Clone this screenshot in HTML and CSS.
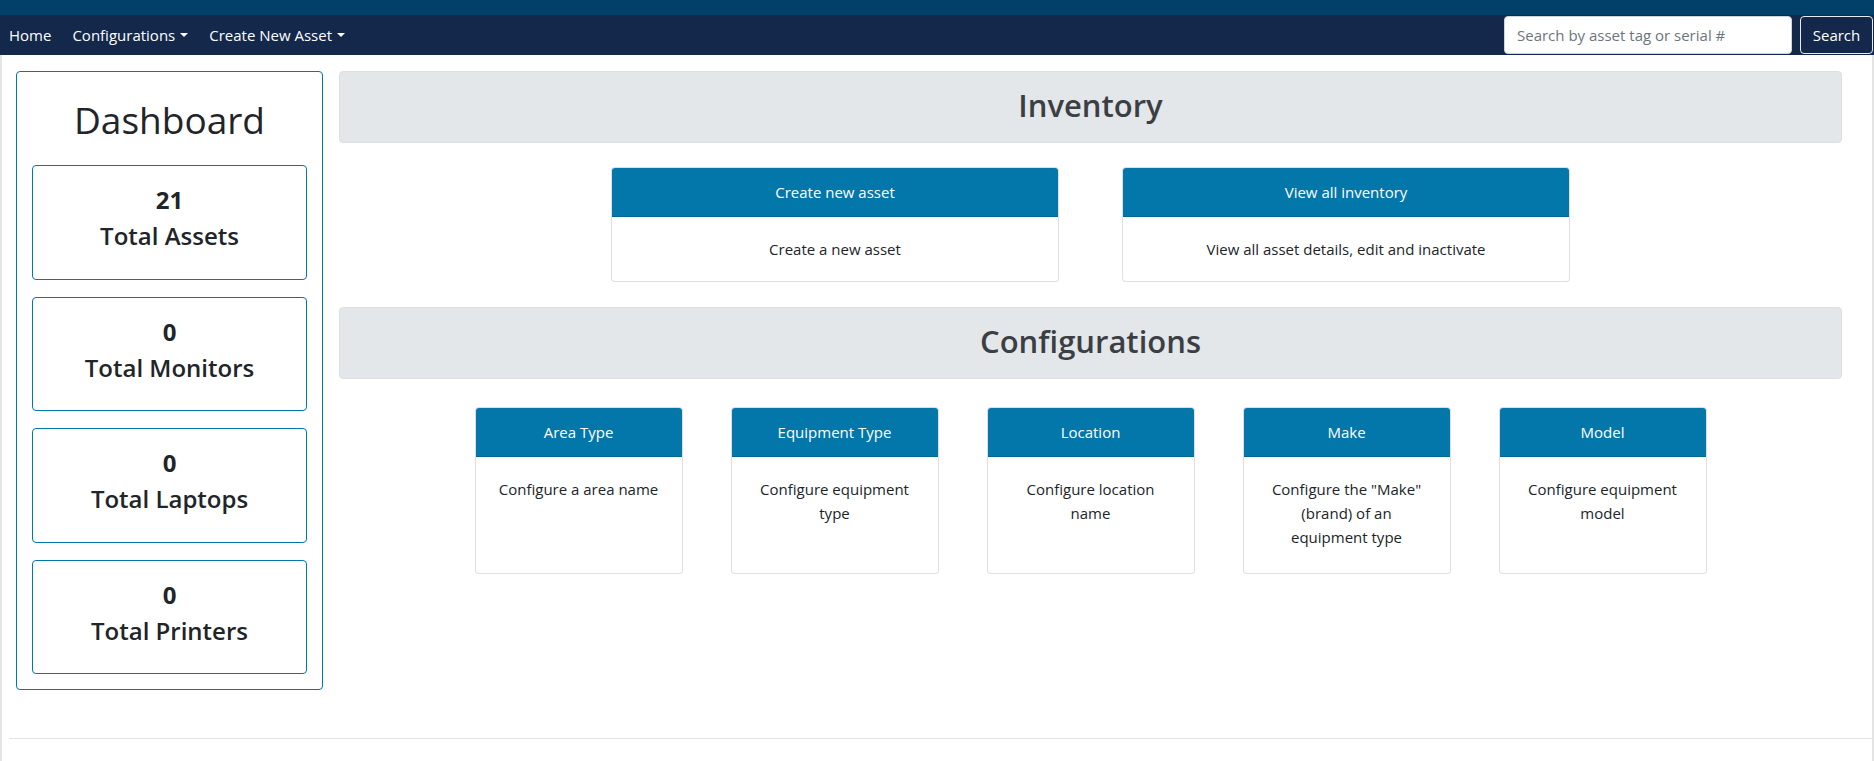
FILE: index.html
```html
<!DOCTYPE html>
<html lang="en">
<head>
<meta charset="utf-8">
<title>Inventory Dashboard</title>
<link rel="stylesheet" href="styles.css">
</head>
<body>
<header class="site-header">
  <div class="topband"></div>
  <nav class="navbar">
    <ul class="nav-links">
      <li><a class="nav-link" href="#">Home</a></li>
      <li><a class="nav-link dropdown" href="#">Configurations<span class="caret"></span></a></li>
      <li><a class="nav-link dropdown" href="#">Create New Asset<span class="caret"></span></a></li>
    </ul>
    <form class="search-form">
      <input class="search-input" type="text" placeholder="Search by asset tag or serial #">
      <button class="search-btn" type="button">Search</button>
    </form>
  </nav>
</header>
<div class="page">
  <div class="content-row">
    <aside class="sidebar">
      <h1 class="sidebar-title">Dashboard</h1>
      <div class="stat-card"><h4 class="stat-num">21</h4><h4 class="stat-label">Total Assets</h4></div>
      <div class="stat-card"><h4 class="stat-num">0</h4><h4 class="stat-label">Total Monitors</h4></div>
      <div class="stat-card"><h4 class="stat-num">0</h4><h4 class="stat-label">Total Laptops</h4></div>
      <div class="stat-card"><h4 class="stat-num">0</h4><h4 class="stat-label">Total Printers</h4></div>
    </aside>
    <main class="main">
      <div class="section-head"><h2>Inventory</h2></div>
      <div class="card-row inventory-row">
        <div class="card wide"><div class="card-header">Create new asset</div><div class="card-body">Create a new asset</div></div>
        <div class="card wide"><div class="card-header">View all inventory</div><div class="card-body">View all asset details, edit and inactivate</div></div>
      </div>
      <div class="section-head"><h2>Configurations</h2></div>
      <div class="card-row config-row">
        <div class="card narrow"><div class="card-header">Area Type</div><div class="card-body">Configure a area name</div></div>
        <div class="card narrow"><div class="card-header">Equipment Type</div><div class="card-body">Configure equipment type</div></div>
        <div class="card narrow"><div class="card-header">Location</div><div class="card-body">Configure location name</div></div>
        <div class="card narrow"><div class="card-header">Make</div><div class="card-body">Configure the "Make" (brand) of an equipment type</div></div>
        <div class="card narrow"><div class="card-header">Model</div><div class="card-body">Configure equipment model</div></div>
      </div>
    </main>
  </div>
  <hr class="footer-rule">
</div>
</body>
</html>
```

FILE: styles.css
```css
* { box-sizing: border-box; }
html, body { margin: 0; padding: 0; }
body {
  font-family: "Open Sans", "Noto Sans", sans-serif;
  font-size: 15px;
  line-height: 24px;
  color: #212529;
  background: #fff;
}
.topband { height: 15px; background: #02406a; }
.navbar {
  height: 40px;
  background: #13284b;
  display: flex;
  align-items: center;
  justify-content: space-between;
  padding: 0 1px 0 0;
}
.nav-links {
  list-style: none;
  margin: 0;
  padding: 0 0 0 1px;
  display: flex;
  align-items: center;
}
.nav-link {
  display: flex;
  align-items: center;
  color: #fff;
  text-decoration: none;
  padding: 8px 8px;
  margin-right: 5px;
}
.caret {
  display: inline-block;
  margin-left: 5px;
  border-top: 4px solid #fff;
  border-left: 4px solid transparent;
  border-right: 4px solid transparent;
}
.search-form { display: flex; align-items: center; gap: 8px; }
.search-input {
  width: 288px;
  height: 38px;
  padding: 6px 12px;
  font: inherit;
  color: #495057;
  background: #fff;
  border: 1px solid #ced4da;
  border-radius: 4px;
}
.search-input::placeholder { color: #6c757d; }
.search-btn {
  height: 38px;
  width: 73px;
  padding: 6px 10px;
  font: inherit;
  color: #fff;
  background: transparent;
  border: 1px solid #e8eaee;
  border-radius: 4px;
}
.page {
  border-left: 2px solid #e4e4e4;
  border-right: 2px solid #e4e4e4;
  padding-top: 16px;
  min-height: 706px;
}
.content-row {
  display: flex;
  align-items: flex-start;
  gap: 16px;
  padding: 0 30px 0 14px;
}
.sidebar {
  width: 307px;
  flex: none;
  border: 1px solid #0377a8;
  border-radius: 4px;
  padding: 15px;
}
.sidebar-title {
  margin: 9px 0 21px;
  font-size: 37px;
  font-weight: 500;
  line-height: 48px;
  text-align: center;
}
.stat-card {
  border: 1px solid #0377a8;
  border-radius: 4px;
  padding: 20px;
  text-align: center;
  margin-bottom: 17px;
}
.stat-card:last-child { margin-bottom: 0; }
.stat-num, .stat-label {
  margin: 0 0 7.5px;
  font-size: 24px;
  line-height: 28.8px;
}
.stat-num { font-weight: 700; }
.stat-label { font-weight: 600; }
.main { flex: 1; }
.section-head {
  background: #e3e7ea;
  border: 1px solid #dcdfe3;
  border-radius: 4px;
  height: 72px;
  padding-bottom: 4px;
  display: flex;
  align-items: center;
  justify-content: center;
}
.section-head h2 {
  margin: 0;
  font-size: 31px;
  font-weight: 600;
  color: #3b3f44;
  line-height: 38px;
}
.card-row {
  display: flex;
  justify-content: center;
  align-items: stretch;
}
.inventory-row { gap: 63px; margin: 24px 0 25px; }
.config-row { gap: 48px; margin-top: 28px; }
.card {
  border: 1px solid rgba(0,0,0,.125);
  border-radius: 4px;
  background: #fff;
  display: flex;
  flex-direction: column;
  overflow: hidden;
}
.card.wide { width: 448px; }
.card.narrow { width: 208px; }
.card-header {
  background: #0376aa;
  color: #fff;
  text-align: center;
  padding: 12px 20px;
  border-bottom: 1px solid rgba(0,0,0,.125);
}
.card-body {
  padding: 20px;
  text-align: center;
  flex: 1;
}
.config-row .card-body { min-height: 116px; }
.footer-rule {
  border: 0;
  border-top: 1px solid #e2e4e8;
  margin: 48px 0 0 7px;
}
```
